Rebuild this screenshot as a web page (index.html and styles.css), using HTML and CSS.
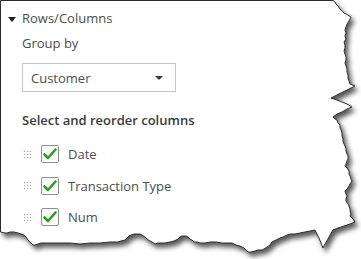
FILE: index.html
```html
<!DOCTYPE html>
<html>
<head>
<meta charset="utf-8">
<link rel="stylesheet" href="styles.css">
</head>
<body>
<div class="paper">
  <svg class="torn" width="361" height="259" viewBox="0 0 361 259" aria-hidden="true">
    <defs>
      <filter id="sh" x="-10%" y="-10%" width="130%" height="130%">
        <feDropShadow dx="3" dy="4" stdDeviation="2.8" flood-color="#000" flood-opacity="0.65"/>
      </filter>
    </defs>
    <polygon filter="url(#sh)" fill="#fff" stroke="#2b2b2b" stroke-width="1" stroke-linejoin="miter"
      points="0.5,0.5 333,0.5 335,2 336,4 338,6 340,9 342,11 344,13 346,14 348,15 351,17 350,19 349,21 347,24 346,27 345,30 346,33 345,36 346,39 344,42 345,45 345,48 344,51 345,54 346,57 346,60 345,63 346,66 347,69 347,72 348,75 348,78 349,81 350,84 355,86 349,89 343,92 337,95 331,98 337,100 342,102 347,104 352,107 347,109 342,112 337,114 333,117 335,119 337,120 338,123 340,125 340,128 341,130 342,133 342,136 343,139 343,141 344,144 345,146 346,149 346,151 347,154 348,156 348,159 347,161 346,164 345,166 347,168 349,171 349,174 350,176 351,179 352,181 350,184 349,186 347,189 345,191 346,194 347,196 346,199 346,201 348,204 349,206 350,209 350,211 351,214 350,216 352,218 353,219 355,222 350,224 344,226 338,228 333,230 330,235 328,239 325,244 323,248 321,243 319,238 317,234 315,230 310,231 305,232 300,233 295,234 291,234 287,235 283,237 280,238 276,240 272,242 270,245 267,247 264,249 262,250 258,250 255,251 251,252 248,252 246,250 244,248 242,247 240,246 236,245 232,243 227,243 222,243 216,242 210,242 205,243 200,243 197,242 194,242 192,240 190,239 188,237 186,236 184,236 182,236 180,237 178,239 174,241 170,242 165,243 160,243 158,243 155,244 152,242 150,241 147,239 145,237 142,235 140,234 137,234 134,234 131,235 129,236 127,238 125,240 121,241 118,242 110,242 100,243 90,243 80,244 70,243 60,243 52,243 45,243 41,243 38,244 35,245 33,245 30,242 28,240 26,237 24,235 21,234 18,233 14,232 10,232 7,233 5,233 0.5,232"/>
  </svg>
  <div class="content">
    <div class="section-head">
      <svg class="tri" width="8" height="5" viewBox="0 0 8 5"><polygon points="0,0 8,0 4,5" fill="#1f1f1f"/></svg>
      <span>Rows/Columns</span>
    </div>
    <div class="label">Group by</div>
    <div class="select">
      <span>Customer</span>
      <svg class="sel-caret" width="8" height="4" viewBox="0 0 8 4"><polygon points="0,0 8,0 4,4" fill="#393a3d"/></svg>
    </div>
    <div class="heading">Select and reorder columns</div>
    <ul class="cols">
      <li class="col-row">
        <span class="handle"></span>
        <span class="check"><svg width="14" height="12" viewBox="0 0 14 12"><polyline points="1.5,6.5 5,10 12.5,1.5" fill="none" stroke="#2ca01c" stroke-width="2.6" stroke-linecap="round" stroke-linejoin="round"/></svg></span>
        <span class="col-name">Date</span>
      </li>
      <li class="col-row">
        <span class="handle"></span>
        <span class="check"><svg width="14" height="12" viewBox="0 0 14 12"><polyline points="1.5,6.5 5,10 12.5,1.5" fill="none" stroke="#2ca01c" stroke-width="2.6" stroke-linecap="round" stroke-linejoin="round"/></svg></span>
        <span class="col-name">Transaction Type</span>
      </li>
      <li class="col-row">
        <span class="handle"></span>
        <span class="check"><svg width="14" height="12" viewBox="0 0 14 12"><polyline points="1.5,6.5 5,10 12.5,1.5" fill="none" stroke="#2ca01c" stroke-width="2.6" stroke-linecap="round" stroke-linejoin="round"/></svg></span>
        <span class="col-name">Num</span>
      </li>
    </ul>
  </div>
</div>
</body>
</html>
```

FILE: styles.css
```css
html, body {
  margin: 0;
  padding: 0;
  background: #fff;
}
body {
  width: 361px;
  height: 259px;
  overflow: hidden;
  font-family: "Open Sans", "Liberation Sans", sans-serif;
  color: #393a3d;
}
.paper {
  position: relative;
  width: 361px;
  height: 259px;
}
.torn {
  position: absolute;
  left: 0;
  top: 0;
}
.content {
  position: relative;
  display: flex;
  flex-direction: column;
  padding: 9px 0 0 22px;
}
.section-head {
  display: flex;
  align-items: center;
  gap: 6px;
  margin-left: -14px;
  font-size: 13px;
  line-height: 18px;
  color: #4d4d4d;
}
.tri {
  display: block;
  margin-top: 2px;
}
.label {
  margin-top: 7px;
  font-size: 13px;
  line-height: 18px;
  color: #4d4d4d;
}
.select {
  margin-top: 11px;
  height: 27px;
  width: 132px;
  border: 1px solid #c4c6ca;
  display: flex;
  align-items: center;
  justify-content: space-between;
  padding: 0 12px 0 8px;
  box-sizing: content-box;
  font-size: 13px;
  color: #4d4d4d;
}
.sel-caret {
  display: block;
}
.heading {
  margin-top: 19px;
  font-size: 13px;
  font-weight: 600;
  line-height: 18px;
  color: #393a3d;
}
.cols {
  list-style: none;
  margin: 16px 0 0;
  padding: 0;
  display: flex;
  flex-direction: column;
  gap: 13.5px;
}
.col-row {
  display: flex;
  align-items: center;
  height: 18px;
}
.handle {
  width: 9px;
  height: 9px;
  margin-left: 1px;
  background-image: radial-gradient(circle, #a9acb1 0.75px, transparent 1.05px);
  background-size: 3px 3px;
}
.check {
  margin-left: 9px;
  width: 16px;
  height: 16px;
  border: 1px solid #8d9096;
  border-radius: 2px;
  display: flex;
  align-items: center;
  justify-content: center;
}
.check svg {
  display: block;
}
.col-name {
  margin-left: 9px;
  font-size: 13px;
  line-height: 18px;
  color: #4d4d4d;
}
```
